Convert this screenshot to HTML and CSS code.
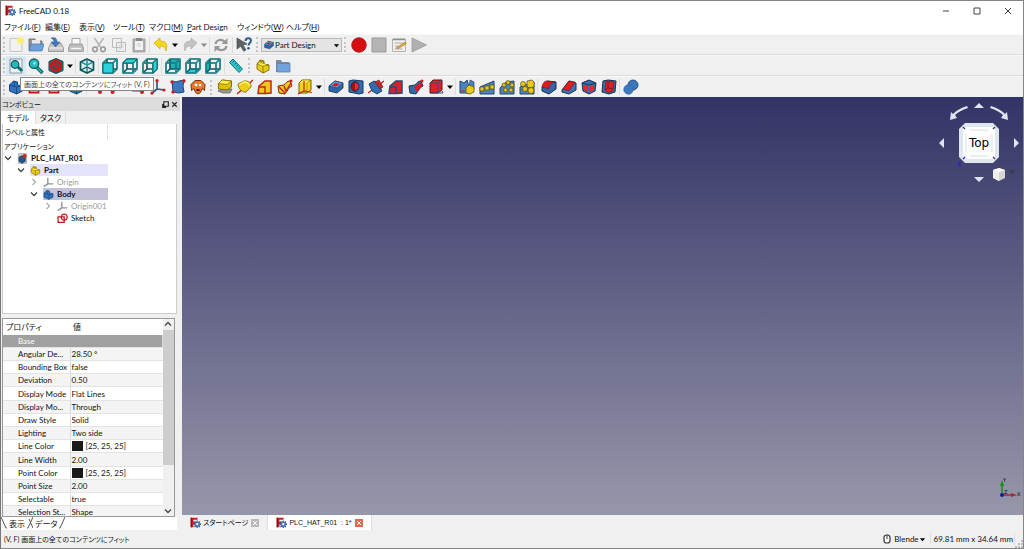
FILE: index.html
```html
<!DOCTYPE html>
<html lang="ja">
<head>
<meta charset="utf-8">
<title>FreeCAD 0.18</title>
<link rel="stylesheet" href="styles.css">
</head>
<body>
<svg class="defs" aria-hidden="true">
<defs>
<symbol id="logo" viewBox="0 0 16 16"><path d="M1 1h10v3H5v3h4v3H5v5H1z" fill="#cb1b1f"/><path d="M1 1h2v14H1z" fill="#8d1013"/><path d="M10.500 5v11M5 10.500h11M6.500 6.500l8 8M14.500 6.500l-8 8" stroke="#3c5f94" stroke-width="2"/><circle cx="10.500" cy="10.500" r="3.900" fill="#4674b5"/><circle cx="10.500" cy="10.500" r="1.600" fill="#fff"/></symbol>
<symbol id="new" viewBox="0 0 16 16"><path d="M2 1.500h12v13H2z" fill="#f1f1ef" stroke="#c5c5c2"/><circle cx="12.500" cy="3.500" r="3.500" fill="#f7ee7d"/><circle cx="12.500" cy="3.500" r="1.600" fill="#fff34a"/></symbol>
<symbol id="open" viewBox="0 0 16 16"><path d="M1 2h6l1 2h6v9H1z" fill="#8f9498" stroke="#777"/><path d="M4 3h8v5H4z" fill="#e8e8e8"/><path d="M3 7h13l-2 7H1z" fill="#6e9fda" stroke="#4577b4" stroke-width=".7"/></symbol>
<symbol id="save" viewBox="0 0 16 16"><path d="M3 6h10l2.500 5v3.500H.5V11z" fill="#c6c7c5" stroke="#8b8d8a" stroke-width=".8"/><path d="M1 11h14" stroke="#f5f5f5"/><path d="M3 1c4-1 6 0 6 4h3L7.500 10 3 5h3c0-2-1-3-3-4z" fill="#3a78c0" stroke="#28598e" stroke-width=".5"/></symbol>
<symbol id="print" viewBox="0 0 16 16"><path d="M4 1.500h8v6H4z" fill="#fafafa" stroke="#a5a5a5"/><path d="M2 7h12l1.500 4v3.500H.5V11z" fill="#bcbcbb" stroke="#969696" stroke-width=".8"/><path d="M3 11.500h10" stroke="#f6f6f6" stroke-width="1.500"/></symbol>
<symbol id="cut" viewBox="0 0 16 16"><path d="M3.500 1l6 9M12.500 1l-6 9" stroke="#b6b6b6" stroke-width="1.500" fill="none"/><circle cx="4" cy="12.300" r="2.300" fill="none" stroke="#999" stroke-width="1.600"/><circle cx="12" cy="12.300" r="2.300" fill="none" stroke="#999" stroke-width="1.600"/></symbol>
<symbol id="copy" viewBox="0 0 16 16"><path d="M1.500 1.500h9v9h-9zM5.500 5.500h9v9h-9z" fill="#f0f0f0" stroke="#bbb"/><path d="M7.500 8h5M7.500 10h5M7.500 12h4" stroke="#d0d0d0"/></symbol>
<symbol id="paste" viewBox="0 0 16 16"><path d="M2 2h12v13H2z" fill="#b0b0ae" stroke="#9a9a98" stroke-width=".8"/><path d="M4 4h8v9H4z" fill="#f2f2f2"/><path d="M5 1h6v3H5z" fill="#8a8a8a"/><path d="M6 7h4M6 9h4" stroke="#ccc"/></symbol>
<symbol id="undo" viewBox="0 0 16 16"><path d="M1 6l6-5v3c6 0 8 3 6 10-1-4-2-5-6-5v3z" fill="#f3d91d" stroke="#c9a80b" stroke-width=".7"/></symbol>
<symbol id="redo" viewBox="0 0 16 16"><path d="M15 6L9 1v3C3 4 1 7 3 14c1-4 2-5 6-5v3z" fill="#c2c2c2" stroke="#aeaeae" stroke-width=".7"/></symbol>
<symbol id="refresh" viewBox="0 0 16 16"><path d="M2.500 7C3 3 9 1 12 5M13.500 9C13 13 7 15 4 11" fill="none" stroke="#989898" stroke-width="2.200"/><path d="M14.500 1v6h-6zM1.500 15V9h6z" fill="#989898"/></symbol>
<symbol id="whats" viewBox="0 0 16 16"><path d="M1 1l10 6-4 1 3 5-2.300 1.300-3-5L1 12z" fill="#5d6265" stroke="#3c4043" stroke-width=".6"/><path d="M9.500 4c0-4 5.500-3.500 5.500-.5 0 2.500-2.500 2.500-2.500 5" fill="none" stroke="#2f5d93" stroke-width="2"/><circle cx="12.500" cy="11.300" r="1.300" fill="#2f5d93"/></symbol>
<symbol id="rec" viewBox="0 0 16 16"><circle cx="8" cy="8" r="7.300" fill="#d80d12" stroke="#8b1d1d" stroke-width=".8"/></symbol>
<symbol id="stop" viewBox="0 0 16 16"><path d="M1 1h14v14H1z" fill="#b4b4b4" stroke="#999"/></symbol>
<symbol id="edit" viewBox="0 0 16 16"><path d="M1.500 2h13v12.500h-13z" fill="#f2f2ee" stroke="#b2b2ac"/><path d="M2 2.500h12" stroke="#8f8f84" stroke-width="1.500"/><path d="M3.500 6h8M3.500 9h4M3.500 12h8" stroke="#aaa"/><path d="M5 11l9-6 1.500 1.500-8 5z" fill="#e1a63a" stroke="#956b23" stroke-width=".5"/></symbol>
<symbol id="play" viewBox="0 0 16 16"><path d="M1 1l14.500 7L1 15z" fill="#b0b0b0" stroke="#999" stroke-width=".8"/></symbol>
<symbol id="fit" viewBox="0 0 16 16"><path d="M2 1h12v14H2z" fill="#f2f4f5" stroke="#8f9699"/><path d="M9 8l5 5" stroke="#116a6e" stroke-width="3"/><circle cx="7" cy="6.500" r="3.800" fill="#26bac0" stroke="#0c5b60" stroke-width="1.200"/></symbol>
<symbol id="fitsel" viewBox="0 0 16 16"><path d="M8.500 9l6 6" stroke="#0c5b60" stroke-width="3.500"/><path d="M9 9.500l5 5" stroke="#26bac0" stroke-width="1.500"/><circle cx="6" cy="5.700" r="4.700" fill="#25bcc2" stroke="#0c5b60" stroke-width="1.300"/><path d="M5 5l3-1-1.500 3z" fill="#d8ffff"/></symbol>
<symbol id="style" viewBox="0 0 16 16"><path d="M8 .5l7 3v9l-7 3-7-3v-9z" fill="#16747a" stroke="#0d4a4e"/><circle cx="8" cy="8" r="5" fill="#365659" stroke="#d31418" stroke-width="2.400"/><path d="M4.500 5l7 6" stroke="#d31418" stroke-width="2.400"/></symbol>
<symbol id="iso" viewBox="0 0 16 16"><path d="M8 1l6.500 3v8L8 15l-6.500-3V4z" fill="#d9efef" stroke="#0e565b" stroke-width="1.700"/><path d="M2 4l6 3 6-3M8 7v8M8 1v6M2 12l6-3 6 3" fill="none" stroke="#0e565b" stroke-width="1.200"/><path d="M8 1.500V14M2.500 4.300L8 7l5.500-2.700" fill="none" stroke="#2cc8cd" stroke-width=".6"/></symbol>
<symbol id="wire" viewBox="0 0 16 16"><path d="M1 5l4-4h10v10l-4 4H1zM1 5h10v10M11 5l4-4M5 1v10h10M5 11l-4 4" fill="none" stroke="#0e565b" stroke-width="1.600" stroke-linejoin="round"/><path d="M1 5l4-4h10v10l-4 4H1zM1 5h10v10M11 5l4-4" fill="none" stroke="#24b5bb" stroke-width=".7"/></symbol>
<symbol id="vfront" viewBox="0 0 16 16"><use href="#wire"/><path d="M1 5h10v10H1z" fill="#2ad2d8" stroke="#0a6b70"/></symbol>
<symbol id="vtop" viewBox="0 0 16 16"><use href="#wire"/><path d="M1 5l4-4h10l-4 4z" fill="#2ad2d8" stroke="#0a6b70"/></symbol>
<symbol id="vright" viewBox="0 0 16 16"><use href="#wire"/><path d="M11 5l4-4v10l-4 4z" fill="#2ad2d8" stroke="#0a6b70"/></symbol>
<symbol id="vrear" viewBox="0 0 16 16"><path d="M5 1h10v10H5z" fill="#1eb0b6"/><use href="#wire"/></symbol>
<symbol id="vbottom" viewBox="0 0 16 16"><path d="M1 15l4-4h10l-4 4z" fill="#2ad2d8"/><use href="#wire"/></symbol>
<symbol id="vleft" viewBox="0 0 16 16"><path d="M1 5l4-4v10l-4 4z" fill="#1eb0b6"/><use href="#wire"/></symbol>
<symbol id="ruler" viewBox="0 0 16 16"><path d="M1.500 4.500L5 1l9.500 10-3.500 3.500z" fill="#2bc4ca" stroke="#0b7075"/><path d="M6 3L4.500 4.500M8 5L6.500 6.500M10 7L8.500 8.500M12 9.500L10.500 11" stroke="#0b6b70"/></symbol>
<symbol id="part" viewBox="0 0 16 16"><path d="M2 6l3-4 4 1v3l5 1v5l-6 3-6-4z" fill="#e8cb12" stroke="#7d6c05" stroke-width=".9"/><path d="M2 6l6 2 6-1M8 8v7M5 2l1 2v2l3-1M6 4l3-1" fill="none" stroke="#7d6c05" stroke-width=".8"/><path d="M3 6l3-1 6 2-4 .8z" fill="#fff15b"/></symbol>
<symbol id="group" viewBox="0 0 16 16"><path d="M1 2h5l1 2h7.500v10H1z" fill="#7b8b9c"/><path d="M2 5.500h13V14H2z" fill="#72a3da" stroke="#5d82ac" stroke-width=".8"/></symbol>
<symbol id="body" viewBox="0 0 16 16"><path d="M1.500 6l4-4 4 1v3l5 1v5l-6 3-7-3z" fill="#2f74c4" stroke="#123766" stroke-width=".9"/><path d="M1.500 6l7 2 6-1M8.500 8v7M5.500 2l1 2v3" fill="none" stroke="#15417a" stroke-width=".8"/></symbol>
<symbol id="sketch" viewBox="0 0 16 16"><path d="M1.500 5.500h9v8h-9z" fill="none" stroke="#c9151b" stroke-width="1.800"/><circle cx="10.500" cy="6" r="4.300" fill="none" stroke="#c9151b" stroke-width="1.800"/></symbol>
<symbol id="axis" viewBox="0 0 16 16"><path d="M7 1v9l8 1M7 10l-6 5" fill="none" stroke="#35597d" stroke-width="1.700"/><circle cx="7" cy="1.700" r="1.600" fill="#cc1e22"/><circle cx="14" cy="11" r="1.600" fill="#cc1e22"/><circle cx="2" cy="14" r="1.600" fill="#cc1e22"/></symbol>
<symbol id="point" viewBox="0 0 16 16"><circle cx="10" cy="13" r="2" fill="#cc1e22"/></symbol>
<symbol id="line" viewBox="0 0 16 16"><path d="M2 14L14 2" stroke="#35597d" stroke-width="1.500"/><circle cx="2.500" cy="13" r="2" fill="#cc1e22"/></symbol>
<symbol id="plane" viewBox="0 0 16 16"><path d="M2 13L5 3h9l-3 10z" fill="#7ba3d2"/><circle cx="12" cy="13" r="2" fill="#cc1e22"/></symbol>
<symbol id="origin" viewBox="0 0 16 16"><path d="M7 1v9h8M7 10l-6 4" fill="none" stroke="#929292" stroke-width="2"/></symbol>
<symbol id="binder" viewBox="0 0 16 16"><path d="M2 2l4 1 3-1 5-1-1 6 1 6-5 1-6-1z" fill="#3d77be" stroke="#1e457a"/><circle cx="2" cy="3" r="1.700" fill="#cc1e22"/><circle cx="14" cy="2" r="1.700" fill="#cc1e22"/><circle cx="3" cy="13" r="1.700" fill="#cc1e22"/></symbol>
<symbol id="clone" viewBox="0 0 16 16"><path d="M5 1.500h6l4 4-.5 6-2.500-2-1.500 4-2.500 1.500-2.500-1.500-1.500-4-2.500 2-.5-6z" fill="#e8772d" stroke="#75330c"/><circle cx="6" cy="6" r="1.300" fill="#fff"/><circle cx="10" cy="6" r="1.300" fill="#fff"/><path d="M6.500 11h3" stroke="#442109" stroke-width="2"/></symbol>
<symbol id="pad" viewBox="0 0 16 16"><path d="M1 12l4-2h10l-2 4H6z" fill="#989898" stroke="#656565" stroke-width=".8"/><path d="M1.500 4.500L5 1l9.500 1v6L10 11l-8.500-1z" fill="#ddc00c" stroke="#675900" stroke-width=".8"/><path d="M1.500 4.500L5 1l9.500 1L10 5.500z" fill="#fff150" stroke="#776805" stroke-width=".7"/></symbol>
<symbol id="revolve" viewBox="0 0 16 16"><path d="M0 15L16 1" stroke="#d02420" stroke-width="1.500"/><path d="M1 5l6-3c4-1 8 3 7 6l-5 5c-3 1-8-3-8-8z" fill="#edcd16" stroke="#76660a" stroke-width=".8"/><path d="M2 6l5-3c3 0 5 2 6 4" fill="none" stroke="#fff67c" stroke-width="1.300"/></symbol>
<symbol id="loft" viewBox="0 0 16 16"><path d="M2 7l6-5h6v12l-5 .5H1z" fill="#e9cb18" stroke="#ca201d" stroke-width="1.500"/><path d="M2 8h6v6" fill="none" stroke="#ca201d" stroke-width="1.400"/></symbol>
<symbol id="pipe" viewBox="0 0 16 16"><path d="M1 7l6-1c2-2 3-4 6-4l2 5c-3 1-4 4-7 8l-6-1z" fill="#e9cb18" stroke="#79300b"/><path d="M2 8l6 6M7 7l2 5 5-8" fill="none" stroke="#c9201d" stroke-width="1.400"/><circle cx="14" cy="2" r="1.500" fill="#c9201d"/></symbol>
<symbol id="prim" viewBox="0 0 16 16"><path d="M2 4l3-3h9v10l-4 3H2z" fill="#f0d21e" stroke="#6d6005"/><path d="M3 3.500L5.500 1.500h7L9.500 3.500z" fill="#fff35b"/><path d="M10 4v9M10 4l4-3" fill="none" stroke="#a3930a" stroke-width=".7"/><path d="M1 15l6-3 8 1.500M7 2v10" stroke="#ca211d" stroke-width="1.200" fill="none"/></symbol>
<symbol id="pocket" viewBox="0 0 16 16"><path d="M1 7l6-5 8 2v5l-6 5-8-2z" fill="#2d65a9" stroke="#132e51" stroke-width=".8"/><path d="M1 7l6-5 8 2-6 5z" fill="#6799d5" stroke="#173d6b" stroke-width=".6"/><path d="M4 6.500l3.500-2.500 4 1-3.500 2.500z" fill="#d2151a"/></symbol>
<symbol id="hole" viewBox="0 0 16 16"><path d="M1 2l4-1 10 1v12l-4 1-10-2z" fill="#326eaf" stroke="#15365e"/><ellipse cx="7" cy="7.500" rx="4" ry="4.800" fill="#9f1115" stroke="#13335a"/><path d="M7 4c5 0 4 7 0 7" fill="#ef2c30"/></symbol>
<symbol id="groove" viewBox="0 0 16 16"><path d="M0 14L16 2" stroke="#bd2020" stroke-width="1.300"/><path d="M1 5l5-3 4 2 4 8-5 3-5-3z" fill="#316dad" stroke="#143155" stroke-width=".8"/><path d="M7 3l4-2 4 7-3 2z" fill="#c9252a" stroke="#5a1718" stroke-width=".6"/></symbol>
<symbol id="subloft" viewBox="0 0 16 16"><path d="M2 7l6-5h6v12l-5 .5H1z" fill="#db2024" stroke="#204d83" stroke-width="1.500"/><path d="M2 8h6v6" fill="none" stroke="#204d83" stroke-width="1.400"/></symbol>
<symbol id="subpipe" viewBox="0 0 16 16"><path d="M1 7l6-1c2-2 3-4 6-4l2 5c-3 1-4 4-7 8l-6-1z" fill="#2f6bb0" stroke="#193553"/><path d="M6 8l7-5 1 4-5 6z" fill="#d81e22"/><circle cx="14" cy="2" r="1.500" fill="#c9201d"/></symbol>
<symbol id="subprim" viewBox="0 0 16 16"><path d="M2 4l3-3h9v10l-4 3H2z" fill="#df2024" stroke="#65171a"/><path d="M2 4h8v10M10 4l4-3M14 12l1 2H2" fill="none" stroke="#23558c"/></symbol>
<symbol id="mirror" viewBox="0 0 16 16"><path d="M1 2l4 2 3-3 2 7v6H1z" fill="#4b83bd" stroke="#1d4472"/><path d="M11 1l4 2v7h-5z" fill="#4b83bd" stroke="#1d4472" stroke-width=".7"/><path d="M7 9l3-3 5 2v5l-4 2-4-1z" fill="#e7ca1b" stroke="#655811" stroke-width=".8"/><path d="M2 11h4l-2 3z" fill="#c93940"/></symbol>
<symbol id="linear" viewBox="0 0 16 16"><path d="M1 8l14-6v13H1z" fill="#4b83bd" stroke="#26466a"/><g fill="#e7ca1b" stroke="#564b0b" stroke-width=".7"><path d="M1 8h4v4H1zM6 7h4v4H6zM11 6h4v4h-4z"/></g></symbol>
<symbol id="polar" viewBox="0 0 16 16"><path d="M1 9l6-6 8-1v13H1z" fill="#4b83bd" stroke="#26466a"/><g fill="#dfc31b" stroke="#564b0b" stroke-width=".7"><circle cx="5" cy="6" r="2"/><circle cx="9" cy="3.500" r="2"/><circle cx="13" cy="6" r="2"/><circle cx="12" cy="11" r="2"/><circle cx="6.500" cy="11" r="2"/></g></symbol>
<symbol id="multi" viewBox="0 0 16 16"><path d="M1 8l14-5v12H1z" fill="#4b83bd" stroke="#26466a"/><g fill="#e7ca1b" stroke="#564b0b" stroke-width=".7"><circle cx="4" cy="5" r="2.500"/><path d="M8 2l5-1 2 2v5l-5 1-2-2z"/><circle cx="12" cy="11.500" r="3"/><circle cx="6" cy="10" r="2.500"/></g></symbol>
<symbol id="fillet" viewBox="0 0 16 16"><path d="M1 8l5-6 9 1v7l-7 5-7-3z" fill="#3268a8" stroke="#142f51"/><path d="M1 8c1-5 3-6 5-6l8 1c-4 1-6 3-6 7z" fill="#de1c20" stroke="#67171a" stroke-width=".6"/></symbol>
<symbol id="chamfer" viewBox="0 0 16 16"><path d="M1 11l7-9 7 2v7l-7 4-7-2z" fill="#3c74b4" stroke="#142f51"/><path d="M2 10l6-8 6 1-6 9z" fill="#e11d22" stroke="#67171a" stroke-width=".6"/></symbol>
<symbol id="draft" viewBox="0 0 16 16"><path d="M1 4l7-3 7 3-1 8-6 3-6-3z" fill="#386fae" stroke="#142f51"/><path d="M3 6l4 1v6l-4-2zM9 7l4-1v5l-4 2z" fill="#ed2528"/><path d="M1 4l7 2 7-2" fill="none" stroke="#17375e"/></symbol>
<symbol id="thick" viewBox="0 0 16 16"><path d="M2 2l5-1 8 1-1 11-6 2-7-2z" fill="#386fae" stroke="#142f51"/><path d="M5 2l8 1-1 9-4 1.500-4-2z" fill="#da2024" stroke="#701519" stroke-width=".6"/><path d="M7 3v6l5 1M7 9l-3 2" fill="none" stroke="#7d1216" stroke-width=".8"/></symbol>
<symbol id="bool" viewBox="0 0 16 16"><circle cx="10" cy="6" r="5" fill="#3b78bd" stroke="#173d6e" stroke-width=".8"/><circle cx="5.500" cy="10.500" r="4.700" fill="#3b78bd" stroke="#3464a0" stroke-width=".8"/></symbol>
<symbol id="doc" viewBox="0 0 16 16"><path d="M2 1h12v14H2z" fill="#c8ced5" stroke="#94999f"/><path d="M3 6l4-2 5 2v6l-5 3-4-3z" fill="#22578f" stroke="#172d48"/><circle cx="11" cy="4.500" r="3" fill="#d9221e"/></symbol>
<symbol id="down" viewBox="0 0 8 8"><path d="M1 2.500h6L4 6z"/></symbol>
<symbol id="chev" viewBox="0 0 8 8"><path d="M1 2.500l3 3 3-3" fill="none" stroke="#444" stroke-width="1.300"/></symbol>
<symbol id="chevr" viewBox="0 0 8 8"><path d="M2.500 1l3 3-3 3" fill="none" stroke="#aaa" stroke-width="1.200"/></symbol>
</defs>
</svg>

<div class="window">
<header class="titlebar">
  <svg class="app-icon"><use href="#logo"/></svg>
  <h1 class="app-title">FreeCAD 0.18</h1>
  <div class="win-buttons">
    <button aria-label="最小化"><svg viewBox="0 0 8 8"><path d="M1 4h6"/></svg></button>
    <button aria-label="最大化"><svg viewBox="0 0 8 8"><path d="M1 1h6v6H1z"/></svg></button>
    <button aria-label="閉じる"><svg viewBox="0 0 8 8"><path d="M1 1l6 6M7 1L1 7"/></svg></button>
  </div>
</header>

<nav class="menubar">
  <button>ファイル(<u>F</u>)</button><button>編集(<u>E</u>)</button><button>表示(<u>V</u>)</button><button>ツール(<u>T</u>)</button><button>マクロ(<u>M</u>)</button><button><u>P</u>art Design</button><button>ウィンドウ(<u>W</u>)</button><button>ヘルプ(<u>H</u>)</button>
</nav>

<div class="toolbar">
  <span class="grip first"></span>
  <button class="tool" aria-label="新規"><svg><use href="#new"/></svg></button>
  <button class="tool" aria-label="開く"><svg><use href="#open"/></svg></button>
  <button class="tool" aria-label="保存"><svg><use href="#save"/></svg></button>
  <button class="tool" aria-label="印刷"><svg><use href="#print"/></svg></button>
  <span class="sep wide"></span>
  <button class="tool" aria-label="切り取り"><svg><use href="#cut"/></svg></button>
  <button class="tool" aria-label="コピー"><svg><use href="#copy"/></svg></button>
  <button class="tool" aria-label="貼り付け"><svg><use href="#paste"/></svg></button>
  <span class="sep"></span>
  <button class="tool" aria-label="元に戻す"><svg><use href="#undo"/></svg></button>
  <button class="drop" aria-label="元に戻す履歴"><svg><use href="#down"/></svg></button>
  <button class="tool" aria-label="やり直す"><svg><use href="#redo"/></svg></button>
  <button class="drop dim" aria-label="やり直す履歴"><svg><use href="#down"/></svg></button>
  <span class="sep"></span>
  <button class="tool" aria-label="更新"><svg><use href="#refresh"/></svg></button>
  <span class="sep wide"></span>
  <button class="tool" aria-label="これは何？"><svg><use href="#whats"/></svg></button>
  <span class="grip"></span>
  <div class="combo">
    <svg class="combo-icon"><use href="#pocket"/></svg>
    <select aria-label="ワークベンチ"><option>Part Design</option></select>
    <svg class="combo-arrow"><use href="#down"/></svg>
  </div>
  <span class="grip"></span>
  <button class="tool" aria-label="マクロの記録"><svg><use href="#rec"/></svg></button>
  <button class="tool" aria-label="記録の停止"><svg><use href="#stop"/></svg></button>
  <button class="tool" aria-label="マクロの編集"><svg><use href="#edit"/></svg></button>
  <button class="tool" aria-label="マクロの実行"><svg><use href="#play"/></svg></button>
</div>

<div class="toolbar">
  <span class="grip first"></span>
  <button class="tool hover" aria-label="全てにフィット"><svg><use href="#fit"/></svg></button>
  <button class="tool" aria-label="選択にフィット"><svg><use href="#fitsel"/></svg></button>
  <button class="tool" aria-label="描画スタイル"><svg><use href="#style"/></svg></button>
  <button class="drop" aria-label="描画スタイル一覧"><svg><use href="#down"/></svg></button>
  <span class="sep"></span>
  <button class="tool" aria-label="等角投影"><svg><use href="#iso"/></svg></button>
  <span class="sep wide"></span>
  <button class="tool" aria-label="正面"><svg><use href="#vfront"/></svg></button>
  <button class="tool" aria-label="上面"><svg><use href="#vtop"/></svg></button>
  <button class="tool" aria-label="右面"><svg><use href="#vright"/></svg></button>
  <span class="sep wide"></span>
  <button class="tool" aria-label="背面"><svg><use href="#vrear"/></svg></button>
  <button class="tool" aria-label="底面"><svg><use href="#vbottom"/></svg></button>
  <button class="tool" aria-label="左面"><svg><use href="#vleft"/></svg></button>
  <span class="sep wide"></span>
  <button class="tool" aria-label="距離を計測"><svg><use href="#ruler"/></svg></button>
  <span class="grip"></span>
  <button class="tool" aria-label="パーツを作成"><svg><use href="#part"/></svg></button>
  <button class="tool" aria-label="グループを作成"><svg><use href="#group"/></svg></button>
</div>

<div class="toolbar last">
  <span class="grip first"></span>
  <button class="tool" aria-label="ボディー"><svg><use href="#body"/></svg></button>
  <button class="tool" aria-label="スケッチ"><svg><use href="#sketch"/></svg></button>
  <button class="tool" aria-label="スケッチを編集"><svg><use href="#sketch"/></svg></button>
  <button class="tool" aria-label="スケッチをマップ"><svg><use href="#body"/></svg></button>
  <span class="sep"></span>
  <button class="tool" aria-label="データム点"><svg><use href="#point"/></svg></button>
  <button class="tool" aria-label="データム線"><svg><use href="#line"/></svg></button>
  <button class="tool" aria-label="データム平面"><svg><use href="#plane"/></svg></button>
  <button class="tool" aria-label="座標系"><svg><use href="#axis"/></svg></button>
  <button class="tool" aria-label="シェイプバインダー"><svg><use href="#binder"/></svg></button>
  <button class="tool" aria-label="クローン"><svg><use href="#clone"/></svg></button>
  <span class="grip"></span>
  <button class="tool" aria-label="パッド"><svg><use href="#pad"/></svg></button>
  <button class="tool" aria-label="レボリューション"><svg><use href="#revolve"/></svg></button>
  <button class="tool" aria-label="加算ロフト"><svg><use href="#loft"/></svg></button>
  <button class="tool" aria-label="加算パイプ"><svg><use href="#pipe"/></svg></button>
  <button class="tool" aria-label="加算プリミティブ"><svg><use href="#prim"/></svg></button>
  <button class="drop" aria-label="加算プリミティブ一覧"><svg><use href="#down"/></svg></button>
  <span class="sep"></span>
  <button class="tool" aria-label="ポケット"><svg><use href="#pocket"/></svg></button>
  <button class="tool" aria-label="ホール"><svg><use href="#hole"/></svg></button>
  <button class="tool" aria-label="グルーブ"><svg><use href="#groove"/></svg></button>
  <button class="tool" aria-label="減算ロフト"><svg><use href="#subloft"/></svg></button>
  <button class="tool" aria-label="減算パイプ"><svg><use href="#subpipe"/></svg></button>
  <button class="tool" aria-label="減算プリミティブ"><svg><use href="#subprim"/></svg></button>
  <button class="drop" aria-label="減算プリミティブ一覧"><svg><use href="#down"/></svg></button>
  <span class="sep"></span>
  <button class="tool" aria-label="鏡像"><svg><use href="#mirror"/></svg></button>
  <button class="tool" aria-label="直線状パターン"><svg><use href="#linear"/></svg></button>
  <button class="tool" aria-label="円状パターン"><svg><use href="#polar"/></svg></button>
  <button class="tool" aria-label="マルチ変換"><svg><use href="#multi"/></svg></button>
  <span class="sep"></span>
  <button class="tool" aria-label="フィレット"><svg><use href="#fillet"/></svg></button>
  <button class="tool" aria-label="面取り"><svg><use href="#chamfer"/></svg></button>
  <button class="tool" aria-label="抜き勾配"><svg><use href="#draft"/></svg></button>
  <button class="tool" aria-label="厚み"><svg><use href="#thick"/></svg></button>
  <span class="sep"></span>
  <button class="tool" aria-label="ブーリアン演算"><svg><use href="#bool"/></svg></button>
  <div class="tooltip" role="tooltip">画面上の全てのコンテンツにフィット (V, F)</div>
</div>

<main class="work">
  <aside class="dock">
    <div class="dock-title"><span>コンボビュー</span>
      <button aria-label="フロート"><svg viewBox="0 0 8 8"><path d="M2.500 1.500h4v4h-4zM1.500 3.500v3h3"/></svg></button>
      <button aria-label="閉じる"><svg viewBox="0 0 8 8"><path d="M2 2l4 4M6 2L2 6"/></svg></button>
    </div>
    <div class="dock-tabs"><button class="active">モデル</button><button>タスク</button></div>
    <section class="tree">
      <div class="tree-head">ラベルと属性</div>
      <div class="node root">アプリケーション</div>
      <div class="node d1 bold"><svg class="tw"><use href="#chev"/></svg><svg class="ni"><use href="#doc"/></svg><span>PLC_HAT_R01</span></div>
      <div class="node d2 bold active-part"><svg class="tw"><use href="#chev"/></svg><svg class="ni"><use href="#part"/></svg><span>Part</span></div>
      <div class="node d3 faint"><svg class="tw"><use href="#chevr"/></svg><svg class="ni"><use href="#origin"/></svg><span>Origin</span></div>
      <div class="node d3 bold active-body"><svg class="tw"><use href="#chev"/></svg><svg class="ni"><use href="#body"/></svg><span>Body</span></div>
      <div class="node d4 faint"><svg class="tw"><use href="#chevr"/></svg><svg class="ni"><use href="#origin"/></svg><span>Origin001</span></div>
      <div class="node d4"><span class="tw"></span><svg class="ni"><use href="#sketch"/></svg><span>Sketch</span></div>
    </section>
    <section class="props">
      <div class="props-view">
        <table>
          <thead><tr><th>プロパティ</th><th>値</th></tr></thead>
          <tbody>
            <tr class="cat"><td colspan="2">Base</td></tr>
            <tr><td>Angular De...</td><td>28.50 °</td></tr>
            <tr><td>Bounding Box</td><td>false</td></tr>
            <tr><td>Deviation</td><td>0.50</td></tr>
            <tr><td>Display Mode</td><td>Flat Lines</td></tr>
            <tr><td>Display Mo...</td><td>Through</td></tr>
            <tr><td>Draw Style</td><td>Solid</td></tr>
            <tr><td>Lighting</td><td>Two side</td></tr>
            <tr><td>Line Color</td><td><i class="swatch"></i>[25, 25, 25]</td></tr>
            <tr><td>Line Width</td><td>2.00</td></tr>
            <tr><td>Point Color</td><td><i class="swatch"></i>[25, 25, 25]</td></tr>
            <tr><td>Point Size</td><td>2.00</td></tr>
            <tr><td>Selectable</td><td>true</td></tr>
            <tr><td>Selection St...</td><td>Shape</td></tr>
          </tbody>
        </table>
      </div>
      <div class="scroll">
        <button aria-label="上へ"><svg class="up"><use href="#chev"/></svg></button>
        <div class="track"><div class="thumb"></div></div>
        <button aria-label="下へ"><svg><use href="#chev"/></svg></button>
      </div>
    </section>
    <div class="prop-tabs">
      <svg class="slant" viewBox="0 0 6 13"><path d="M0 0l5 11h1"/></svg><button class="active">表示</button><svg class="slant" viewBox="0 0 6 13"><path d="M0 11h1L6 0M2 2l4 9"/></svg><button>データ</button><svg class="slant" viewBox="0 0 6 13"><path d="M0 11h1L6 0"/></svg>
    </div>
  </aside>

  <section class="center">
    <div class="view3d">
      <svg class="navcube" viewBox="0 0 86 86">
        <g fill="#dfe5ee">
          <path d="M43 5l5 5H38zM43 84l5-5H38zM3 45l5-5v10zM83 45l-5-5v10z"/>
          <path d="M14 22l1-8 2 2c4-4 8-6 14-8l1 2c-6 2-10 4-13 7l2 3zM72 22l-1-8-2 2c-4-4-8-6-14-8l-1 2c6 2 10 4 13 7l-2 3z"/>
        </g>
        <path d="M29 25h28l6 6v28l-6 6H29l-6-6V31z" fill="#e0e6ef"/>
        <rect x="27" y="29" width="32" height="32" rx="3" fill="#fcfdff"/>
        <path d="M34 32h18M34 58h18M30 36v18M56 36v18" stroke="#c8cdd6" stroke-width=".6"/>
        <path d="M27 29l2 2M59 29l-2 2M59 61l-2-2" stroke="#33396d" stroke-width="1.300"/>
        <path d="M27 61l2-2" stroke="#22b" stroke-width="1.300"/>
        <text class="cube-label" x="43" y="49" text-anchor="middle">Top</text>
        <text class="cube-z" x="21" y="68">Z</text>
        <path d="M57 72l6-2 6 2v8l-6 3-6-3z" fill="#d6d6d6"/><path d="M57 72l6 2v9l-6-3z" fill="#eee"/><path d="M57 72l6-2 6 2-6 2z" fill="#fff"/>
        <path d="M72 72h7l-3 4z" fill="#3b3c48"/>
      </svg>
      <svg class="triad" viewBox="0 0 24 24">
        <path d="M3 18V6" stroke="#149018" stroke-width="1.500"/><path d="M3 3l2 6H1z" fill="#149018"/>
        <path d="M3 18h11" stroke="#a32b30" stroke-width="1.500"/><path d="M18 18l-6 2v-4z" fill="#a32b30"/>
        <circle cx="3" cy="18" r="2" fill="#1919a0"/>
        <text x="4" y="5">Y</text><text x="18" y="19">X</text><text x="5" y="17">Z</text>
      </svg>
    </div>
    <div class="doc-tabs">
      <div class="doc-tab"><svg class="ti"><use href="#logo"/></svg><span>スタートページ</span><button aria-label="閉じる"><svg viewBox="0 0 8 8"><path d="M2 2l4 4M6 2L2 6"/></svg></button></div>
      <div class="doc-tab active"><svg class="ti"><use href="#logo"/></svg><span>PLC_HAT_R01 &nbsp;: 1*</span><button aria-label="閉じる"><svg viewBox="0 0 8 8"><path d="M2 2l4 4M6 2L2 6"/></svg></button></div>
    </div>
  </section>
</main>

<footer class="status">
  <span class="message">(V, F) 画面上の全てのコンテンツにフィット</span>
  <svg class="mouse" viewBox="0 0 8 10"><rect x="1" y="1" width="6" height="8" rx="2.500" fill="#fff" stroke="#333" stroke-width="1.200"/><path d="M4 1v4" stroke="#333"/></svg>
  <button class="navstyle">Blende<svg><use href="#down"/></svg></button>
  <span class="size">69.81 mm x 34.64 mm</span>
  <svg class="sizer" viewBox="0 0 8 8"><path d="M6 0h2v2H6zM3 3h2v2H3zM6 3h2v2H6zM0 6h2v2H0zM3 6h2v2H3zM6 6h2v2H6z" fill="#bbb"/></svg>
</footer>
</div>
</body>
</html>
```

FILE: styles.css
```css
* { box-sizing: border-box; }

body {
  margin: 0;
  font: 8px/12px Lato, "Noto Sans CJK JP", sans-serif;
  font-feature-settings: "palt";
  color: #111;
}

button, select {
  margin: 0;
  padding: 0;
  border: 0;
  background: none;
  font: inherit;
  font-feature-settings: inherit;
  color: inherit;
}

svg { display: block; flex: none; }
.defs { position: absolute; width: 0; height: 0; }

.window {
  display: flex;
  flex-direction: column;
  height: 100vh;
  border: 1px solid #858585;
  border-left-color: #777;
  background: #f0f0f0;
}

/* title and menus */
.titlebar { display: flex; align-items: center; height: 19px; padding-left: 4px; background: #fff; }
.app-icon { width: 11px; height: 11px; }
.app-title { flex: 1; margin: 0 0 0 3px; font-size: 8px; font-weight: 400; }
.win-buttons { display: flex; }
.win-buttons button { display: flex; width: 31px; justify-content: center; }
.win-buttons svg { width: 8px; height: 8px; fill: none; stroke: #444; stroke-width: 1; }

.menubar {
  display: grid;
  grid-template-columns: 41px 34px 34px 36px 38px 50px 49px auto;
  height: 14px;
  padding-left: 3px;
  background: #fff;
}
.menubar button { justify-self: start; white-space: nowrap; }

/* toolbars */
.toolbar {
  position: relative;
  display: flex;
  align-items: center;
  height: 21px;
  border-top: 1px solid #f8f8f8;
  border-bottom: 1px solid #dcdcdc;
}
.toolbar.last { border-bottom: 0; }
.tool { display: flex; align-items: center; justify-content: center; width: 20px; height: 19px; flex: none; }
.tool svg { width: 16px; height: 16px; }
.tool.hover { background: #d8e8f4; }
.drop { width: 9px; flex: none; }
.drop svg { width: 8px; height: 8px; }
.drop.dim { fill: #888; }
.sep { width: 1px; height: 16px; margin: 0 1px 0 0; background: #dcdcdc; flex: none; }
.sep.wide { margin: 0 1px; }
.grip { width: 3px; height: 15px; margin: 0 2px; border-left: 2px dotted #c5c5c5; flex: none; }
.grip.first { width: 2px; margin: 0 1px 0 2px; }

.combo { position: relative; display: flex; width: 81px; height: 14px; border: 1px solid #b9b9b9; background: #e4e4e4; }
.combo select { flex: 1; padding-left: 13px; appearance: none; outline: 0; line-height: 12px; }
.combo-icon { position: absolute; left: 2px; top: 1px; width: 10px; height: 10px; }
.combo-arrow { position: absolute; right: 1px; top: 3px; width: 7px; height: 7px; }

.tooltip {
  position: absolute;
  left: 19px;
  top: 0;
  z-index: 2;
  height: 14px;
  padding: 0 3px;
  border: 1px solid #858585;
  background: #fff;
  color: #444;
  font-size: 7px;
  white-space: nowrap;
}

/* left dock */
.work { display: flex; flex: 1; min-height: 0; }
.dock { display: flex; flex-direction: column; width: 181px; padding-right: 5px; flex: none; }
.dock-title { display: flex; align-items: center; height: 14px; margin-right: -3px; padding: 0 1px; background: #dcdcdc; font-size: 7px; }
.dock-title span { flex: 1; }
.dock-title svg { width: 9px; height: 9px; fill: none; stroke: #222; stroke-width: 1; }
.dock-tabs { display: flex; height: 13px; }
.dock-tabs button { width: 30px; border-right: 1px solid #ddd; }
.dock-tabs .active { width: 35px; background: #fff; }

.tree { flex: 190 1 0; min-height: 0; margin-left: 1px; border: 1px solid #ccc; border-top: 0; background: #fff; overflow: hidden; }
.tree-head { width: 105px; height: 16px; padding: 2px 0 0 2px; border-right: 1px solid #e2e2e2; font-size: 7px; }
.node { display: flex; align-items: center; width: 105px; height: 12px; }
.root { padding-left: 1px; font-size: 7px; }
.d1 { padding-left: 1px; }
.d2 { padding-left: 14px; }
.d3 { padding-left: 27px; }
.d4 { padding-left: 41px; }
.tw { width: 8px; height: 8px; margin-right: 5px; flex: none; }
.ni { width: 11px; height: 11px; margin-right: 3px; }
.bold { font-weight: 700; }
.faint { color: #999; }
.active-part { background: linear-gradient(to right, transparent 27px, #e3e3fb 27px); }
.active-body { background: linear-gradient(to right, transparent 40px, #c4c2d9 40px); }

/* property editor */
.props { display: flex; flex: 199 1 0; min-height: 0; margin: 4px 2px 0 1px; border: 1px solid #999; background: #fff; }
.props-view { flex: 1; overflow: hidden; }
.props table { width: 100%; border-collapse: collapse; table-layout: fixed; line-height: 10px; }
.props th { height: 16px; padding: 0 3px; font-weight: 400; text-align: left; }
.props th:first-child { width: 67px; }
.props td { height: 13px; padding: 0 1px; white-space: nowrap; border-bottom: 1px solid #e3e3e3; }
.props tr:nth-child(5n) td { height: 14px; }
.props td:first-child { padding-left: 15px; border-right: 1px solid #dcdcdc; }
.props tbody tr:nth-child(even) { background: #f4f4f4; }
.props tbody .cat { background: #a0a0a0; color: #fff; }
.swatch { display: inline-block; width: 11px; height: 10px; margin-right: 3px; background: #191919; vertical-align: top; }
.scroll { display: flex; flex-direction: column; width: 11px; background: #f0f0f0; }
.scroll button { height: 11px; padding-left: 1px; }
.scroll svg { width: 8px; height: 8px; }
.scroll .up { transform: rotate(180deg); }
.track { flex: 1; }
.thumb { height: 77%; background: #cdcdcd; }

.prop-tabs { display: flex; height: 13px; background: #fff; }
.prop-tabs button { padding: 0 2px; }
.slant { width: 6px; height: 13px; fill: none; stroke: #555; stroke-width: 1; }

/* 3D view */
.center { display: flex; flex: 1; flex-direction: column; min-width: 0; }
.view3d { position: relative; flex: 1; background: linear-gradient(#333366, #9797ab); }
.navcube { position: absolute; right: 1px; top: 1px; width: 86px; height: 86px; }
.cube-label { font: 12px "DejaVu Sans", sans-serif; fill: #000; }
.cube-z { font: bold 6px "DejaVu Sans", sans-serif; fill: #2222c8; }
.triad { position: absolute; right: 0; bottom: 14px; width: 24px; height: 24px; font: 5px "DejaVu Sans", sans-serif; }

.doc-tabs { display: flex; height: 15px; font-size: 7px; }
.doc-tab { display: flex; align-items: center; padding: 0 8px; border-right: 1px solid #ddd; font-family: "Liberation Sans", "Noto Sans CJK JP", sans-serif; }
.doc-tab.active { background: #fff; }
.doc-tab .ti { width: 11px; height: 11px; margin-right: 2px; }
.doc-tab button { width: 8px; height: 8px; margin-left: 3px; background: #b9b9b9; }
.doc-tab.active button { background: #e06b49; }
.doc-tab button svg { width: 8px; height: 8px; stroke: #fff; stroke-width: 1; }

/* status bar */
.status { display: flex; align-items: center; height: 18px; padding-left: 3px; }
.message { flex: 1; font-size: 7px; }
.mouse { width: 8px; height: 10px; margin-right: 3px; }
.navstyle { display: flex; align-items: center; margin-right: 4px; }
.navstyle svg { width: 7px; height: 7px; }
.size { padding: 0 1px 0 3px; border-left: 1px solid #ddd; border-right: 1px solid #ddd; }
.sizer { width: 8px; height: 8px; align-self: flex-end; }
```
